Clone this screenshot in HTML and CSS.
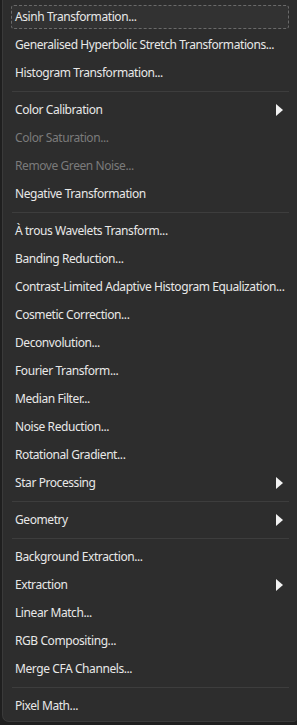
FILE: index.html
```html
<!DOCTYPE html>
<html>
<head>
<meta charset="utf-8">
<link rel="stylesheet" href="styles.css">
</head>
<body>
<div class="menu">
  <div class="item focus">Asinh Transformation...</div>
  <div class="item">Generalised Hyperbolic Stretch Transformations...</div>
  <div class="item">Histogram Transformation...</div>
  <div class="sep"></div>
  <div class="item sub">Color Calibration<span class="arrow"></span></div>
  <div class="item disabled">Color Saturation...</div>
  <div class="item disabled">Remove Green Noise...</div>
  <div class="item">Negative Transformation</div>
  <div class="sep"></div>
  <div class="item">À trous Wavelets Transform...</div>
  <div class="item">Banding Reduction...</div>
  <div class="item">Contrast-Limited Adaptive Histogram Equalization...</div>
  <div class="item">Cosmetic Correction...</div>
  <div class="item">Deconvolution...</div>
  <div class="item">Fourier Transform...</div>
  <div class="item">Median Filter...</div>
  <div class="item">Noise Reduction...</div>
  <div class="item">Rotational Gradient...</div>
  <div class="item sub">Star Processing<span class="arrow"></span></div>
  <div class="sep"></div>
  <div class="item sub">Geometry<span class="arrow"></span></div>
  <div class="sep"></div>
  <div class="item">Background Extraction...</div>
  <div class="item sub">Extraction<span class="arrow"></span></div>
  <div class="item">Linear Match...</div>
  <div class="item">RGB Compositing...</div>
  <div class="item">Merge CFA Channels...</div>
  <div class="sep"></div>
  <div class="item">Pixel Math...</div>
</div>
</body>
</html>
```
FILE: styles.css
```css
html, body {
  margin: 0;
  padding: 0;
  background: #1f1f1f;
  height: 725px;
  overflow: hidden;
}
.menu {
  margin-left: 2px;
  width: 295px;
  height: 722px;
  box-sizing: border-box;
  background: #2d2d2d;
  border-left: 1px solid #3a3a3a;
  border-bottom: 1px solid #3a3a3a;
  border-bottom-left-radius: 7px;
  border-bottom-right-radius: 4px;
  padding: 3px 8px 0 8px;
  font-family: "Noto Sans", "Open Sans", sans-serif;
  font-size: 12px;
  color: #e8e8e8;
}
.item {
  height: 28px;
  display: flex;
  align-items: center;
  padding-left: 4px;
  padding-bottom: 1px;
  box-sizing: border-box;
  white-space: nowrap;
  letter-spacing: -0.42px;
}
.item.focus {
  margin-top: 2px;
  height: 24px;
  margin-bottom: 2px;
  border: 1px dashed #6a6a6a;
  border-radius: 3px;
  background: #323232;
  padding-left: 3px;
}
.item.disabled {
  color: #7b7b7b;
}
.sub {
  justify-content: space-between;
}
.arrow {
  width: 0;
  height: 0;
  border-top: 6px solid transparent;
  border-bottom: 6px solid transparent;
  border-left: 7px solid #f2f2f2;
  margin-right: 6px;
}
.sep {
  height: 1px;
  background: #3d3d3d;
  margin: 4px 0 4px 1px;
}
```
